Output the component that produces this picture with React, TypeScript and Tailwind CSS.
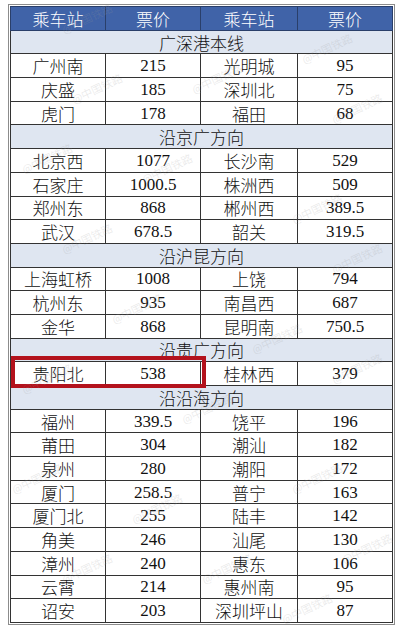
import React from 'react';

type Row = [string, string, string, string];

interface Section {
  title: string;
  rows: Row[];
}

const sections: Section[] = [
  {
    title: '广深港本线',
    rows: [
      ['广州南', '215', '光明城', '95'],
      ['庆盛', '185', '深圳北', '75'],
      ['虎门', '178', '福田', '68'],
    ],
  },
  {
    title: '沿京广方向',
    rows: [
      ['北京西', '1077', '长沙南', '529'],
      ['石家庄', '1000.5', '株洲西', '509'],
      ['郑州东', '868', '郴州西', '389.5'],
      ['武汉', '678.5', '韶关', '319.5'],
    ],
  },
  {
    title: '沿沪昆方向',
    rows: [
      ['上海虹桥', '1008', '上饶', '794'],
      ['杭州东', '935', '南昌西', '687'],
      ['金华', '868', '昆明南', '750.5'],
    ],
  },
  {
    title: '沿贵广方向',
    rows: [['贵阳北', '538', '桂林西', '379']],
  },
  {
    title: '沿沿海方向',
    rows: [
      ['福州', '339.5', '饶平', '196'],
      ['莆田', '304', '潮汕', '182'],
      ['泉州', '280', '潮阳', '172'],
      ['厦门', '258.5', '普宁', '163'],
      ['厦门北', '255', '陆丰', '142'],
      ['角美', '246', '汕尾', '130'],
      ['漳州', '240', '惠东', '106'],
      ['云霄', '214', '惠州南', '95'],
      ['诏安', '203', '深圳坪山', '87'],
    ],
  },
];

// faint "@中国铁路" marks scattered over the picture
const marks: [number, number][] = [
  [60, 10], [300, 40], [70, 80], [190, 70], [330, 100],
  [20, 150], [140, 160], [290, 200], [60, 230], [330, 250],
  [110, 300], [250, 330], [20, 370], [330, 360], [180, 400],
  [10, 470], [130, 500], [290, 470], [60, 560], [200, 560],
  [340, 540], [280, 600],
];

const cjk = "font-['Noto_Sans_CJK_SC',sans-serif] font-light";
const serif = "font-['Liberation_Serif','Noto_Sans_CJK_SC',serif]";

export default function App() {
  return (
    <div className="relative w-[404px] h-[631px] bg-white overflow-hidden">
      <div className="pt-[4px] pl-[8px]">
        <div className="w-[387px] border-[1.5px] border-[#8c8c8c] p-[1px]">
          <table className="w-full border-collapse border border-[#222] table-fixed text-[17px] text-[#111]">
            <colgroup>
              <col className="w-[95px]" />
              <col className="w-[95px]" />
              <col className="w-[97px]" />
              <col className="w-[95px]" />
            </colgroup>
            <thead>
              <tr className="h-[23.7px] bg-[#4063a8] text-white">
                {['乘车站', '票价', '乘车站', '票价'].map((h, i) => (
                  <th key={i} className={`${cjk} leading-none border border-[#2a3f6a] p-0`}>
                    {h}
                  </th>
                ))}
              </tr>
            </thead>
            <tbody>
              {sections.map(s => (
                <React.Fragment key={s.title}>
                  <tr className="h-[23.7px] bg-[#dfe6f1]">
                    <td colSpan={4} className={`${cjk} text-center leading-none border border-[#333] p-0`}>
                      {s.title}
                    </td>
                  </tr>
                  {s.rows.map(r => (
                    <tr key={r[0]} className="h-[23.7px] bg-white">
                      <td className={`${cjk} text-center leading-none border border-[#333] p-0`}>{r[0]}</td>
                      <td className={`${serif} text-center leading-none border border-[#333] p-0`}>{r[1]}</td>
                      <td className={`${cjk} text-center leading-none border border-[#333] p-0`}>{r[2]}</td>
                      <td className={`${serif} text-center leading-none border border-[#333] p-0`}>{r[3]}</td>
                    </tr>
                  ))}
                </React.Fragment>
              ))}
            </tbody>
          </table>
        </div>
      </div>

      {/* highlight box round 贵阳北 */}
      <div className="absolute left-[11px] top-[356px] w-[195px] h-[32px] border-[4px] border-[#b3121c]" />

      {marks.map(([x, y], i) => (
        <span
          key={i}
          className={`${cjk} absolute text-[11px] text-[#9a9a9a] opacity-25 -rotate-[25deg] pointer-events-none whitespace-nowrap`}
          style={{ left: x, top: y }}
        >
          @中国铁路
        </span>
      ))}
    </div>
  );
}
